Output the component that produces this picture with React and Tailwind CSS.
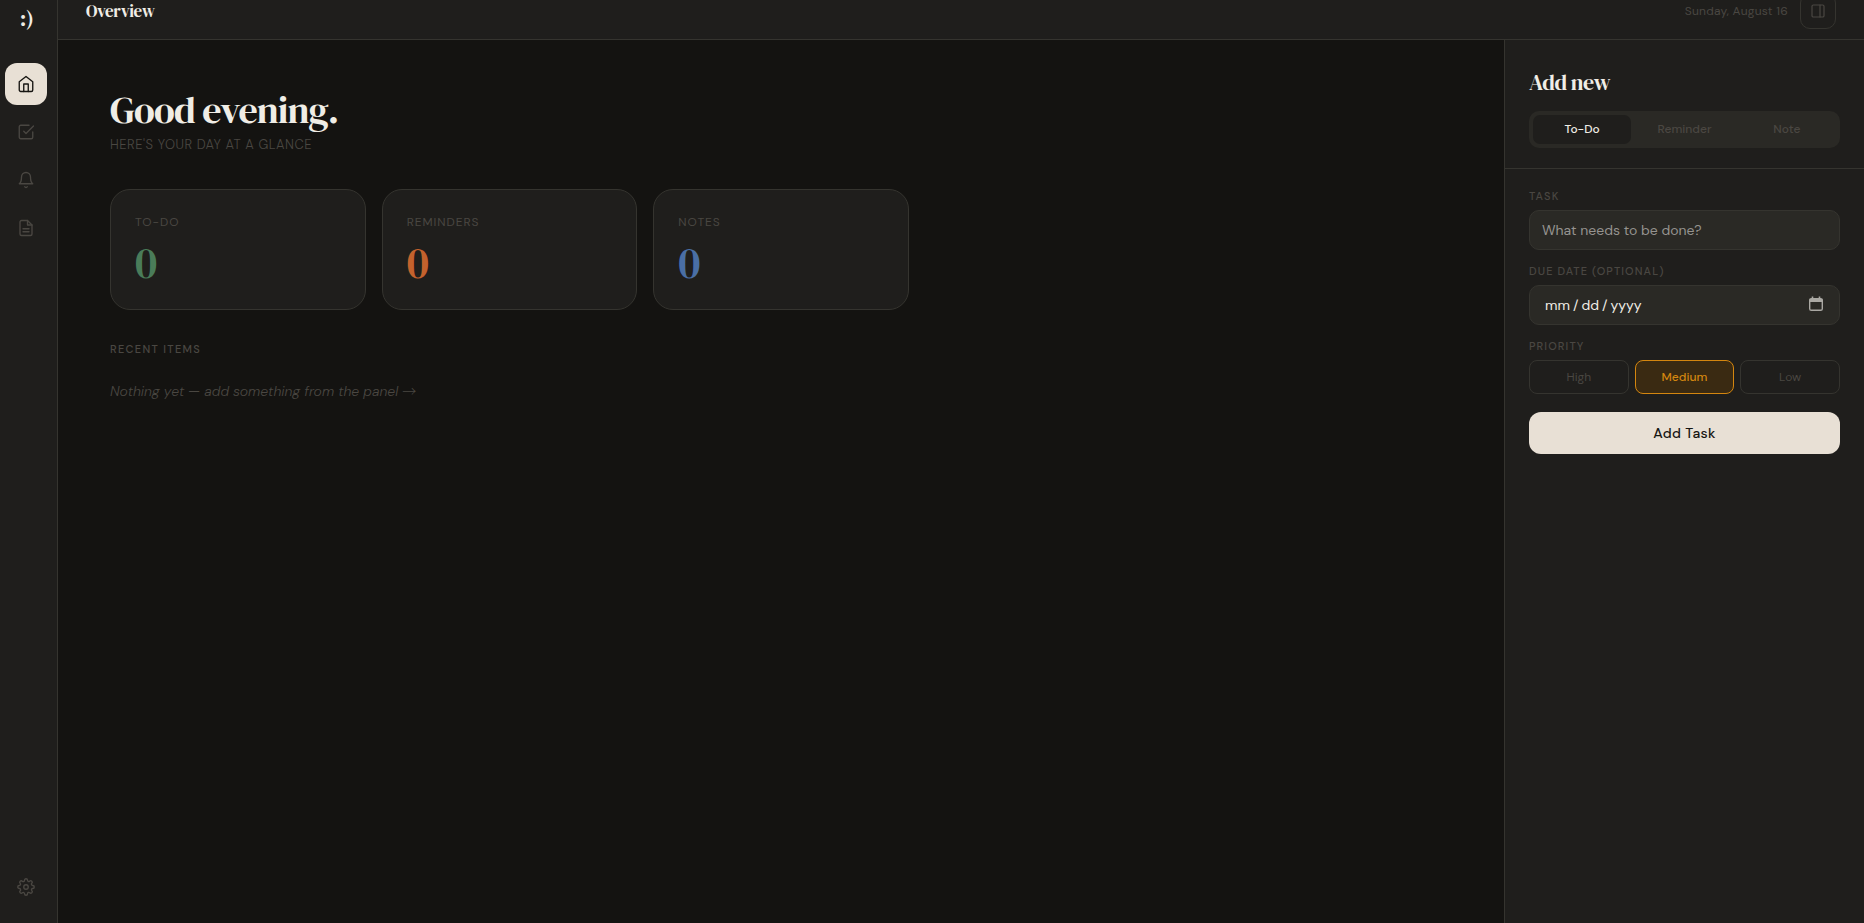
import { useState } from "react";

const serif = "font-['DM_Serif_Display','Liberation_Serif',serif] font-normal tracking-tight";

function Icon({ className = "size-[18px]", children }) {
  return (
    <svg className={className} viewBox="0 0 24 24" fill="none" stroke="currentColor" strokeWidth="1.8" strokeLinecap="round" strokeLinejoin="round" aria-hidden="true">
      {children}
    </svg>
  );
}

function HomeIcon() {
  return (
    <Icon>
      <path d="M3 9l9-7 9 7v11a2 2 0 0 1-2 2H5a2 2 0 0 1-2-2z" />
      <path d="M9 22V12h6v10" />
    </Icon>
  );
}

function TaskIcon() {
  return (
    <Icon>
      <path d="M9 11l3 3L22 4" />
      <path d="M21 12v7a2 2 0 0 1-2 2H5a2 2 0 0 1-2-2V5a2 2 0 0 1 2-2h11" />
    </Icon>
  );
}

function BellIcon() {
  return (
    <Icon>
      <path d="M18 8A6 6 0 0 0 6 8c0 7-3 9-3 9h18s-3-2-3-9" />
      <path d="M13.73 21a2 2 0 0 1-3.46 0" />
    </Icon>
  );
}

function NoteIcon() {
  return (
    <Icon>
      <path d="M14 2H6a2 2 0 0 0-2 2v16a2 2 0 0 0 2 2h12a2 2 0 0 0 2-2V8z" />
      <path d="M14 2v6h6M16 13H8M16 17H8" />
    </Icon>
  );
}

function GearIcon() {
  return (
    <Icon>
      <circle cx="12" cy="12" r="3" />
      <path d="M19.4 15a1.65 1.65 0 0 0 .33 1.82l.06.06a2 2 0 0 1-2.83 2.83l-.06-.06a1.65 1.65 0 0 0-1.82-.33 1.65 1.65 0 0 0-1 1.51V21a2 2 0 0 1-4 0v-.09A1.65 1.65 0 0 0 9 19.4a1.65 1.65 0 0 0-1.82.33l-.06.06a2 2 0 0 1-2.83-2.83l.06-.06A1.65 1.65 0 0 0 4.68 15a1.65 1.65 0 0 0-1.51-1H3a2 2 0 0 1 0-4h.09A1.65 1.65 0 0 0 4.6 9a1.65 1.65 0 0 0-.33-1.82l-.06-.06a2 2 0 0 1 2.83-2.83l.06.06A1.65 1.65 0 0 0 9 4.68a1.65 1.65 0 0 0 1-1.51V3a2 2 0 0 1 4 0v.09a1.65 1.65 0 0 0 1 1.51 1.65 1.65 0 0 0 1.82-.33l.06-.06a2 2 0 0 1 2.83 2.83l-.06.06A1.65 1.65 0 0 0 19.4 9a1.65 1.65 0 0 0 1.51 1H21a2 2 0 0 1 0 4h-.09a1.65 1.65 0 0 0-1.51 1z" />
    </Icon>
  );
}

const nav = [
  { label: "Overview", Glyph: HomeIcon },
  { label: "To-Do", Glyph: TaskIcon },
  { label: "Reminders", Glyph: BellIcon },
  { label: "Notes", Glyph: NoteIcon },
];

const stats = [
  { label: "To-Do", value: 0, color: "text-[#4a7c59]" },
  { label: "Reminders", value: 0, color: "text-[#c4622d]" },
  { label: "Notes", value: 0, color: "text-[#4a6fa5]" },
];

function Sidebar() {
  const [active, setActive] = useState("Overview");
  return (
    <nav className="flex w-[58px] shrink-0 flex-col border-r border-[#35342f] bg-[#1f1e1c] pt-1.5 pr-[9px] pb-[15px] pl-[5px]">
      <div className={`${serif} mb-[33px] text-center text-[22px] leading-6 text-[#f0ede6]`}>:)</div>
      <div className="flex flex-col gap-1.5">
        {nav.map(({ label, Glyph }) => (
          <button
            key={label}
            aria-label={label}
            onClick={() => setActive(label)}
            className={`flex h-[42px] w-[42px] items-center justify-center rounded-xl ${active === label ? "bg-[#e8e0d5] text-[#161512]" : "text-[#4a4742]"}`}
          >
            <Glyph />
          </button>
        ))}
      </div>
      <button aria-label="Settings" className="mt-auto flex h-[42px] w-[42px] items-center justify-center rounded-xl text-[#4a4742]">
        <GearIcon />
      </button>
    </nav>
  );
}

function Header() {
  return (
    <header className="flex h-10 shrink-0 items-end overflow-hidden border-b border-[#35342f] bg-[#1f1e1c] px-7 pb-[10px]">
      <div className="flex h-9 w-full items-center">
        <h1 className={`${serif} text-[17px] leading-5 text-[#f0ede6]`}>Overview</h1>
        <time className="mr-3 ml-auto text-xs tracking-[0.02em] text-[#4a4742]">Sunday, August 16</time>
        <button aria-label="Toggle panel" className="flex size-9 items-center justify-center rounded-[10px] border border-[#35342f] text-[#4a4742]">
          <Icon className="size-4">
            <rect x="3" y="3" width="18" height="18" rx="2" />
            <path d="M15 3v18" />
          </Icon>
        </button>
      </div>
    </header>
  );
}

function Overview() {
  return (
    <main className="min-w-0 flex-1 overflow-auto px-[52px] pt-[47px]">
      <h2 className={`${serif} text-[38px] leading-[46px] text-[#f0ede6]`}>Good evening.</h2>
      <p className="mt-0.5 text-[13px] leading-5 font-light tracking-[0.04em] text-[#4a4742] uppercase">Here's your day at a glance</p>
      <div className="mt-[34px] grid max-w-[799px] grid-cols-3 gap-4">
        {stats.map((s) => (
          <section key={s.label} className="h-[121px] rounded-[20px] border border-[#35342f] bg-[#1f1e1c] px-6 pt-[22px]">
            <h3 className="text-xs leading-5 tracking-[0.08em] text-[#4a4742] uppercase">{s.label}</h3>
            <p className={`${serif} mt-[7px] text-[44px] leading-[48px] ${s.color}`}>{s.value}</p>
          </section>
        ))}
      </div>
      <h3 className="mt-[29px] text-[11px] leading-5 font-medium tracking-[0.12em] text-[#4a4742] uppercase">Recent items</h3>
      <p className="mt-[22px] text-sm leading-5 font-light text-[#4a4742] italic">
        Nothing yet — add something from the panel <span className="font-['Noto_Sans_CJK_SC',sans-serif] leading-none not-italic">→</span>
      </p>
    </main>
  );
}

const fieldLabel = "text-[11px] leading-4 font-medium tracking-widest text-[#4a4742] uppercase";
const field = "h-10 w-full rounded-[10px] border border-[#35342f] bg-[#2a2925] text-sm text-[#f0ede6] outline-none";

function AddPanel() {
  const [tab, setTab] = useState("To-Do");
  const [priority, setPriority] = useState("Medium");
  return (
    <aside className="w-[360px] shrink-0 border-l border-[#35342f] bg-[#1f1e1c]">
      <div className="border-b border-[#35342f] px-6 pt-7 pb-5">
        <h2 className={`${serif} text-[22px] leading-7 text-[#f0ede6]`}>Add new</h2>
        <div role="tablist" className="mt-[15px] flex gap-1 rounded-[10px] bg-[#2a2925] p-1">
          {["To-Do", "Reminder", "Note"].map((t) => (
            <button
              key={t}
              role="tab"
              aria-selected={tab === t}
              onClick={() => setTab(t)}
              className={`h-[29px] flex-1 basis-0 rounded-[7px] pb-px text-xs font-medium ${tab === t ? "bg-[#1f1e1c] text-[#f0ede6]" : "text-[#4a4742]"}`}
            >
              {t}
            </button>
          ))}
        </div>
      </div>
      <form className="flex flex-col px-6 pt-[19px]" onSubmit={(e) => e.preventDefault()}>
        <label htmlFor="task" className={fieldLabel}>Task</label>
        <input id="task" type="text" placeholder="What needs to be done?" className={`${field} mt-1.5 px-3 placeholder:text-[#95938f]`} />
        <label htmlFor="due" className={`${fieldLabel} mt-[13px]`}>Due date (optional)</label>
        <div className="relative mt-1.5">
          <input
            id="due"
            type="date"
            className={`${field} pr-3 pl-3.5 [color-scheme:dark] [&::-webkit-calendar-picker-indicator]:opacity-0 [&::-webkit-datetime-edit-text]:px-[2px]`}
          />
          <svg className="pointer-events-none absolute top-[11px] right-4 size-4" viewBox="0 0 16 16" fill="none" aria-hidden="true">
            <path d="M4.5 0.5v3M11.5 0.5v3" stroke="#aaa8a3" strokeWidth="1.6" />
            <rect x="1.7" y="2.7" width="12.6" height="11.6" rx="1.6" stroke="#aaa8a3" strokeWidth="1.4" />
            <path d="M1.5 3h13v3h-13z" fill="#aaa8a3" />
          </svg>
        </div>
        <span id="priority" className={`${fieldLabel} mt-[13px]`}>Priority</span>
        <div role="group" aria-labelledby="priority" className="mt-1.5 grid grid-cols-3 gap-1.5">
          {["High", "Medium", "Low"].map((p) => (
            <button
              key={p}
              type="button"
              aria-pressed={priority === p}
              onClick={() => setPriority(p)}
              className={`h-[34px] rounded-lg border text-xs ${priority === p ? "border-[#d4860f] bg-[#3a2a12] font-medium text-[#d4860f]" : "border-[#35342f] text-[#4a4742]"}`}
            >
              {p}
            </button>
          ))}
        </div>
        <button type="submit" className="mt-[18px] h-[42px] rounded-xl bg-[#e8e0d5] text-sm font-medium tracking-wide text-[#161512]">Add Task</button>
      </form>
    </aside>
  );
}

export default function App() {
  return (
    <div className="flex h-screen overflow-hidden bg-[#141311] font-['DM_Sans',Inter,sans-serif]">
      <Sidebar />
      <div className="flex min-w-0 flex-1 flex-col">
        <Header />
        <div className="flex min-h-0 flex-1">
          <Overview />
          <AddPanel />
        </div>
      </div>
    </div>
  );
}
